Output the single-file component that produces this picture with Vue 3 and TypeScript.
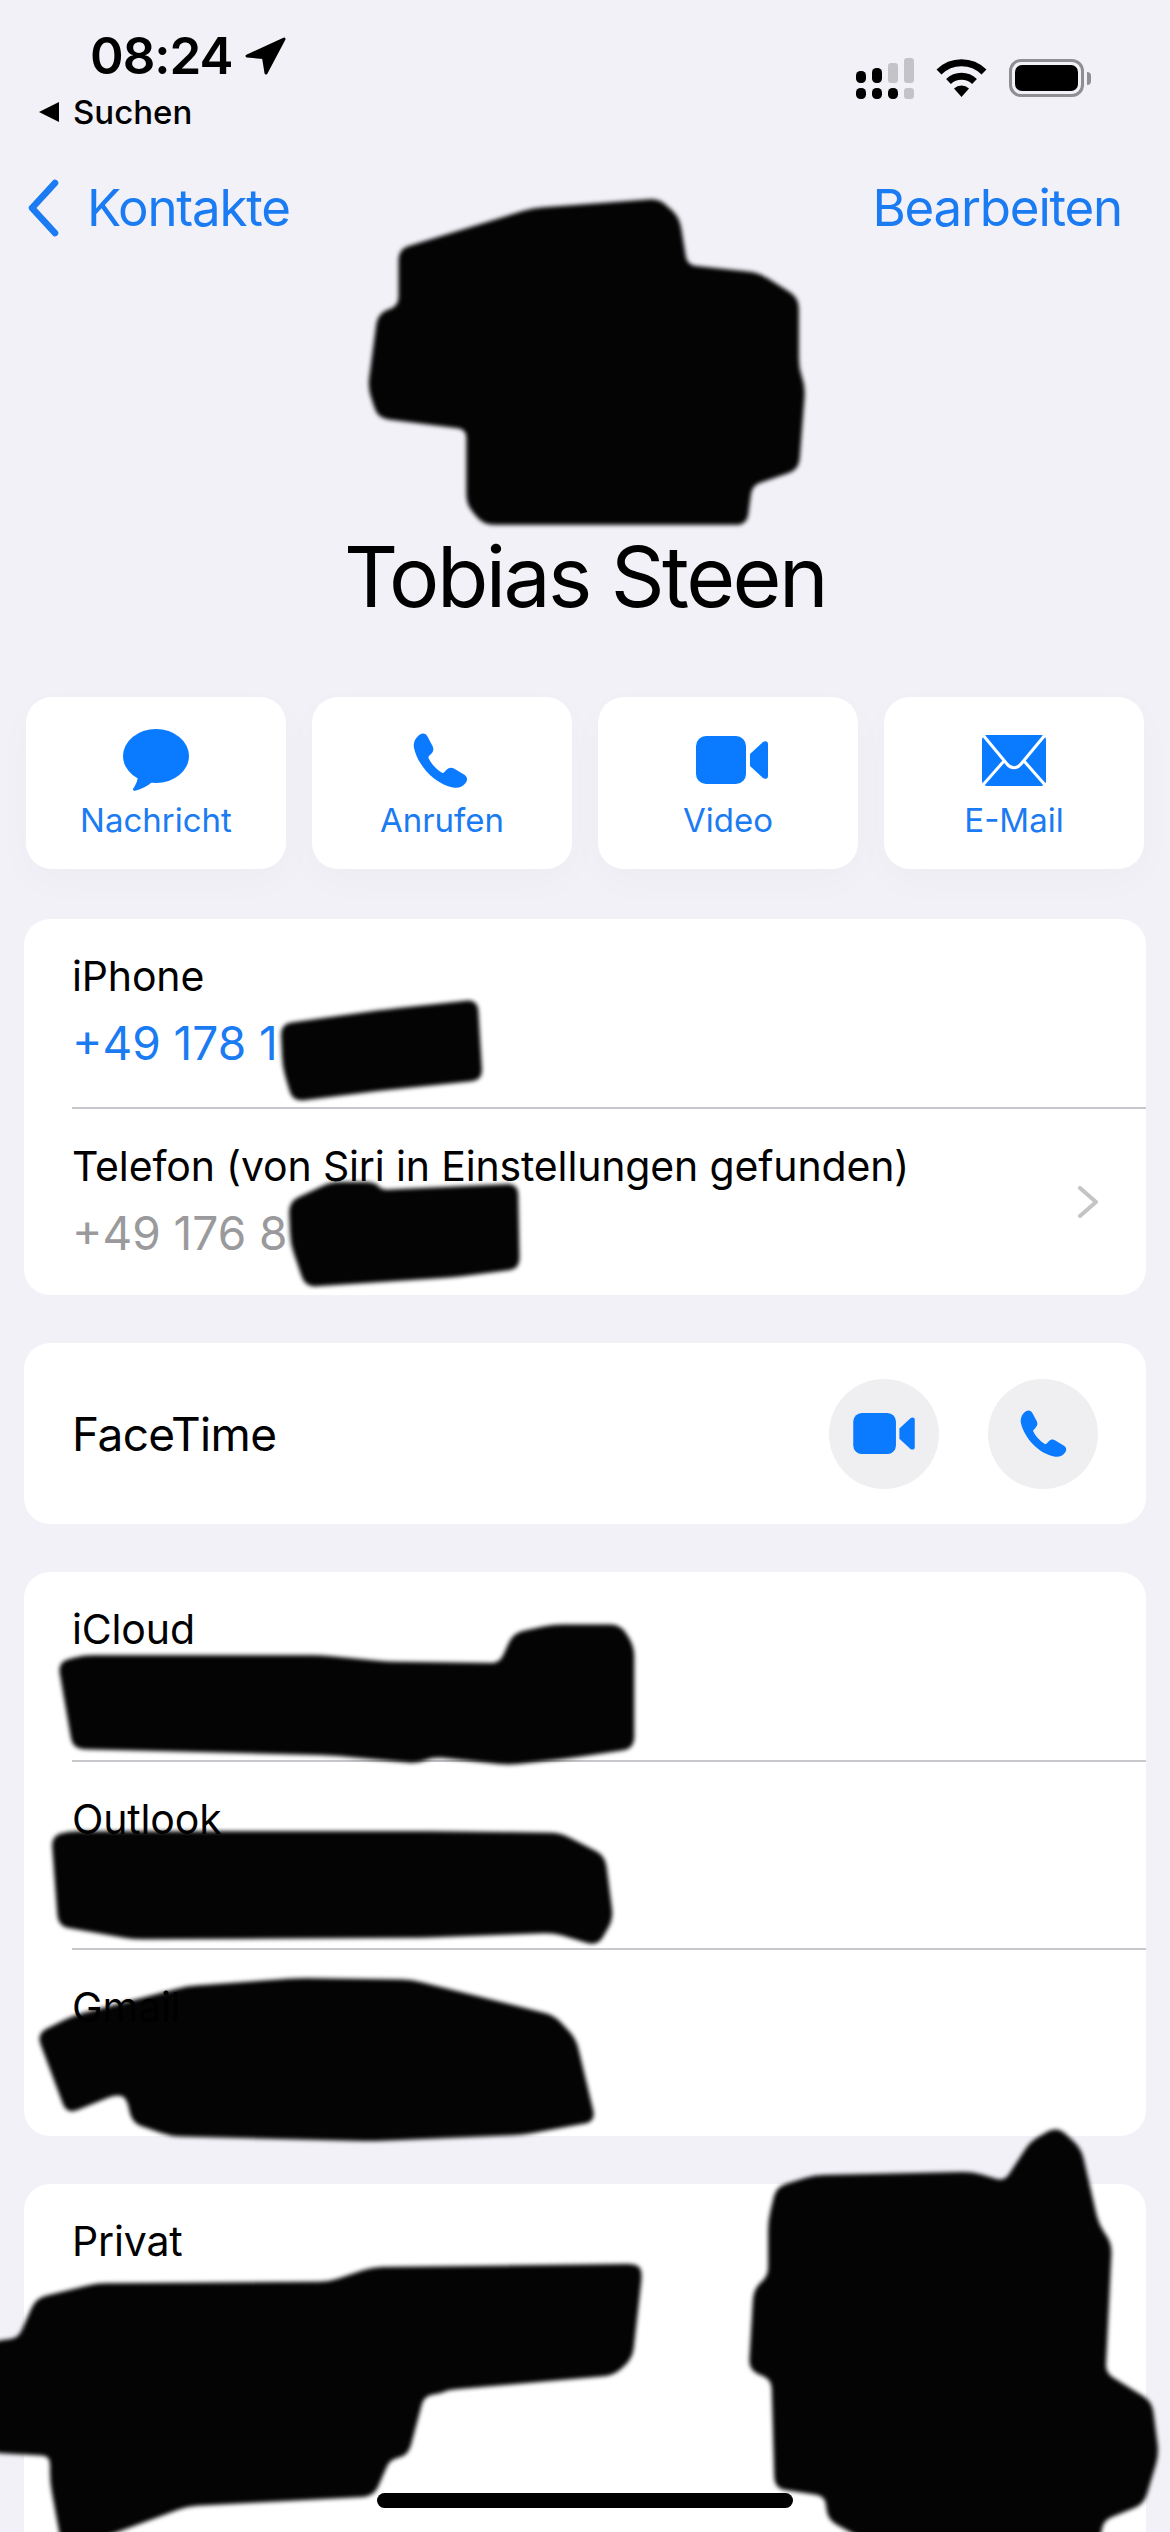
<script setup lang="ts">
interface Action { label: string; icon: string }
interface Row { label: string; value?: string; muted?: boolean; chevron?: boolean }

const actions: Action[] = [
  { label: 'Nachricht', icon: 'message' },
  { label: 'Anrufen', icon: 'phone' },
  { label: 'Video', icon: 'video' },
  { label: 'E-Mail', icon: 'mail' },
]

const phones: Row[] = [
  { label: 'iPhone', value: '+49 178 1' },
  { label: 'Telefon (von Siri in Einstellungen gefunden)', value: '+49 176 8', muted: true, chevron: true },
]

const mails: Row[] = [{ label: 'iCloud' }, { label: 'Outlook' }, { label: 'Gmail' }]

const phonePath =
  'M7 1.5C10-.5 13 .5 14.5 3.5L19.5 13C21 16 20.5 18.5 18 21L16 23C15.3 23.7 15.2 24.5 15.7 25.5C18.5 31 23 36 28.5 39.5C29.5 40.2 30.5 40 31.2 39.2L33.5 36.8C35.8 34.4 38.5 34 41.3 35.7L51 41.5C54.2 43.5 55 46.5 53 49.5C50 53.8 45.5 55.5 40 54.5C22 51 5 33 1 15C0 9.5 2.5 4.5 7 1.5Z'

// Schwarze Übermalungen aus dem Original, Koordinaten im 725x1568-Raster
const scribbles: string[] = [
  '248,155 330,130 408,124 420,135 425,165 470,170 494,185 494,228 498,240 494,290 465,300 462,324 300,324 290,312 290,265 235,258 229,240 235,195 248,190',
  '175,635 240,626 295,620 298,668 240,674 182,681 176,660',
  '180,745 205,733 232,733 236,738 320,734 321,785 280,790 190,796 181,770',
  '37,1030 52,1026 199,1026 240,1030 310,1031 319,1012 343,1007 384,1007 392,1020 392,1082 352,1088 315,1092 268,1087 259,1091 204,1086 46,1082',
  '33,1138 42,1135 259,1135 347,1136 374,1150 379,1188 370,1204 343,1196 259,1199 83,1200 37,1192',
  '24,1260 46,1249 116,1231 185,1226 255,1227 343,1249 356,1263 368,1313 324,1321 231,1325 106,1322 83,1314 79,1298 72,1296 42,1308',
  '394,1403 231,1405 204,1414 60,1415 23,1424 12,1449 -5,1451 -5,1518 32,1520 32,1537 39,1575 51,1575 116,1551 231,1545 241,1522 252,1520 262,1483 273,1481 278,1479 380,1470 391,1460 397,1407',
  '477,1375 482,1355 505,1348 602,1346 623,1352 639,1327 655,1318 669,1331 680,1378 688,1390 684,1470 713,1488 717,1520 708,1550 683,1560 680,1575 542,1575 514,1560 512,1545 481,1540 479,1473 465,1467 468,1418 477,1410',
]

// Ecken eines Polygons abrunden, damit es wie ein Pinselstrich aussieht
function rounded(points: string, r = 6): string {
  const pts = points.split(' ').map((p) => p.split(',').map(Number))
  const n = pts.length
  let d = ''
  for (let i = 0; i < n; i++) {
    const [x, y] = pts[i]
    const [px, py] = pts[(i + n - 1) % n]
    const [nx, ny] = pts[(i + 1) % n]
    const lp = Math.hypot(px - x, py - y)
    const ln = Math.hypot(nx - x, ny - y)
    const rp = Math.min(r, lp / 2) / lp
    const rn = Math.min(r, ln / 2) / ln
    const a = `${(x + (px - x) * rp).toFixed(1)} ${(y + (py - y) * rp).toFixed(1)}`
    const b = `${(x + (nx - x) * rn).toFixed(1)} ${(y + (ny - y) * rn).toFixed(1)}`
    d += `${i === 0 ? 'M' : 'L'}${a}Q${x} ${y} ${b}`
  }
  return d + 'Z'
}

const scribblePaths = scribbles.map((s) => rounded(s))
</script>

<template>
  <div class="page">
    <header class="status">
      <div class="status-left">
        <div class="time-row">
          <span class="time">08:24</span>
          <svg class="loc" viewBox="0 0 41 38"><path d="M39 2L21 36L18.500 20.500L2 19Z" fill="#000" stroke="#000" stroke-width="3" stroke-linejoin="round" /></svg>
        </div>
        <div class="back-app">
          <svg class="tri" viewBox="0 0 22 22"><path d="M21 1V21L1 11Z" fill="#000" /></svg>
          <span>Suchen</span>
        </div>
      </div>
      <div class="status-right">
        <svg class="signal" viewBox="0 0 58 41">
          <rect x="0" y="13" width="10" height="12" rx="4.500" />
          <rect x="16" y="10" width="10" height="15" rx="4.500" />
          <rect x="32" y="5" width="10" height="20" rx="3" fill="#c4c4c8" />
          <rect x="48" y="0" width="10" height="25" rx="3" fill="#c4c4c8" />
          <rect x="0" y="30" width="10" height="11" rx="4.500" />
          <rect x="16" y="30" width="10" height="11" rx="4.500" />
          <rect x="32" y="30" width="10" height="11" rx="4.500" />
          <rect x="48" y="30" width="10" height="11" rx="3" fill="#c4c4c8" />
        </svg>
        <svg class="wifi" viewBox="0 0 51 38">
          <path d="M3 13A32 32 0 0 1 48 13" fill="none" stroke="#000" stroke-width="7" />
          <path d="M12.500 22.500A19 19 0 0 1 38.500 22.500" fill="none" stroke="#000" stroke-width="7" />
          <path d="M18 29.500A11 11 0 0 1 33 29.500L25.500 38Z" fill="#000" />
        </svg>
        <div class="battery"><div class="battery-fill"></div></div>
        <div class="battery-nub"></div>
      </div>
    </header>

    <nav class="nav">
      <div class="nav-back">
        <svg class="chev" viewBox="0 0 34 58"><path d="M29 4L6 29L29 54" fill="none" stroke="#1a7bf2" stroke-width="6.500" stroke-linecap="round" stroke-linejoin="round" /></svg>
        <span>Kontakte</span>
      </div>
      <span>Bearbeiten</span>
    </nav>

    <h1 class="name">Tobias Steen</h1>

    <section class="actions">
      <div v-for="a in actions" :key="a.label" class="action">
        <div class="action-icon" :class="a.icon">
          <svg v-if="a.icon === 'message'" width="66" height="62" viewBox="0 0 66 62">
            <ellipse cx="33" cy="27" rx="33" ry="27" fill="#0a7aff" />
            <path d="M15 46C15 52 12 57 10 60C9.500 61.500 11 62 13 61.500C19 60 25 57 30 52Z" fill="#0a7aff" />
          </svg>
          <svg v-else-if="a.icon === 'phone'" width="55" height="55" viewBox="0 0 55 55"><path :d="phonePath" fill="#0a7aff" /></svg>
          <svg v-else-if="a.icon === 'video'" width="72" height="48" viewBox="0 0 72 48">
            <rect width="50" height="48" rx="10" fill="#0a7aff" />
            <path d="M54 18L67 6C69 4.500 72 5 72 8V40C72 43 69 43.500 67 42L54 30Z" fill="#0a7aff" />
          </svg>
          <svg v-else width="64" height="51" viewBox="0 0 64 51">
            <rect width="64" height="51" rx="5" fill="#0a7aff" />
            <path d="M1 0L25 29C29 34 35 34 39 29L63 0M0 51L22 26M64 51L42 26" fill="none" stroke="#fff" stroke-width="3" />
          </svg>
        </div>
        <span class="action-label">{{ a.label }}</span>
      </div>
    </section>

    <section class="card first">
      <div v-for="r in phones" :key="r.label" class="row">
        <div class="row-text">
          <div class="label">{{ r.label }}</div>
          <div class="value" :class="{ muted: r.muted }">{{ r.value }}</div>
        </div>
        <svg v-if="r.chevron" class="row-chev" viewBox="0 0 22 32"><path d="M3 2L19 16L3 30" fill="none" stroke="#c4c4c7" stroke-width="4" stroke-linecap="round" stroke-linejoin="round" /></svg>
      </div>
    </section>

    <section class="card facetime">
      <span>FaceTime</span>
      <div class="ft-buttons">
        <div class="ft-btn">
          <svg width="62" height="41" viewBox="0 0 72 48">
            <rect width="50" height="48" rx="10" fill="#0a7aff" />
            <path d="M54 18L67 6C69 4.500 72 5 72 8V40C72 43 69 43.500 67 42L54 30Z" fill="#0a7aff" />
          </svg>
        </div>
        <div class="ft-btn">
          <svg width="47" height="47" viewBox="0 0 55 55"><path :d="phonePath" fill="#0a7aff" /></svg>
        </div>
      </div>
    </section>

    <section class="card">
      <div v-for="r in mails" :key="r.label" class="row">
        <div class="row-text">
          <div class="label">{{ r.label }}</div>
        </div>
      </div>
    </section>

    <section class="card last">
      <div class="row">
        <div class="row-text">
          <div class="label">Privat</div>
        </div>
      </div>
    </section>

    <svg class="scribbles" viewBox="0 0 725 1568" preserveAspectRatio="none">
      <defs>
        <filter id="soft" x="-5%" y="-5%" width="110%" height="110%"><feGaussianBlur stdDeviation="1.200" /></filter>
      </defs>
      <path v-for="(d, i) in scribblePaths" :key="i" :d="d" fill="#000" fill-opacity="0.985" stroke="#000" stroke-width="2" stroke-linejoin="round" filter="url(#soft)" />
    </svg>

    <div class="home-bar"></div>
  </div>
</template>

<style>
html, body {
  margin: 0;
  background: #f1f1f7;
}
</style>

<style scoped>
.page {
  position: relative;
  width: 1170px;
  height: 2532px;
  overflow: hidden;
  background: #f1f1f7;
  font-family: Inter, "Liberation Sans", sans-serif;
  color: #000;
}

.status {
  height: 160px;
  display: flex;
  justify-content: space-between;
  box-sizing: border-box;
}
.status-left {
  padding: 32px 0 0 38px;
}
.time-row {
  display: flex;
  align-items: center;
  gap: 12px;
  margin-left: 52px;
  height: 48px;
}
.time {
  font-size: 51px;
  font-weight: 600;
  letter-spacing: -1px;
  line-height: 48px;
}
.loc {
  width: 41px;
  height: 38px;
}
.back-app {
  display: flex;
  align-items: center;
  gap: 13px;
  margin-top: 12px;
  font-size: 33px;
  font-weight: 500;
  line-height: 40px;
}
.tri {
  width: 22px;
  height: 22px;
}
.status-right {
  display: flex;
  align-items: flex-start;
  padding: 58px 79px 0 0;
}
.signal {
  width: 58px;
  height: 41px;
}
.wifi {
  width: 51px;
  height: 38px;
  margin: 1px 22px 0;
}
.battery {
  box-sizing: border-box;
  width: 75px;
  height: 38px;
  margin-top: 1px;
  border: 3px solid #8e8e93;
  border-radius: 12px;
  padding: 3px;
}
.battery-fill {
  height: 100%;
  background: #000;
  border-radius: 7px;
}
.battery-nub {
  width: 4px;
  height: 13px;
  margin: 14px 0 0 3px;
  background: #8e8e93;
  border-radius: 0 4px 4px 0;
}

.nav {
  display: flex;
  justify-content: space-between;
  align-items: center;
  height: 94px;
  margin-top: 1px;
  padding: 0 48px 0 26px;
  color: #1a7bf2;
  font-size: 51px;
  letter-spacing: -1.2px;
  line-height: 60px;
}
.nav-back {
  display: flex;
  align-items: center;
  gap: 27px;
}
.chev {
  width: 34px;
  height: 58px;
}

.name {
  margin: 272px 0 0;
  text-align: center;
  font-size: 84px;
  font-weight: 400;
  line-height: 100px;
  letter-spacing: -2.6px;
}

.actions {
  display: grid;
  grid-template-columns: repeat(4, 1fr);
  gap: 26px;
  margin: 70px 26px 0;
}
.action {
  height: 172px;
  background: #fff;
  border-radius: 26px;
  box-shadow: 0 12px 40px rgba(0, 0, 40, 0.025);
  display: flex;
  flex-direction: column;
  align-items: center;
}
.action-icon {
  height: 62px;
  margin-top: 32px;
  display: flex;
  align-items: center;
  justify-content: center;
}
.action-icon.phone {
  margin-left: -3px;
}
.action-icon.video {
  margin-left: 8px;
}
.action-label {
  margin-top: 7px;
  font-size: 33px;
  line-height: 44px;
  color: #1a7bf2;
}

.card {
  margin: 48px 24px 0;
  background: #fff;
  border-radius: 26px;
}
.card.first {
  margin-top: 50px;
}
.row {
  height: 188px;
  margin-left: 48px;
  padding-right: 48px;
  box-sizing: border-box;
  display: flex;
  align-items: center;
  justify-content: space-between;
}
.row + .row {
  border-top: 2px solid #c8c8cc;
}
.row-text {
  align-self: flex-start;
  padding-top: 30px;
}
.label {
  font-size: 41px;
  letter-spacing: -0.15px;
  line-height: 54px;
}
.value {
  margin-top: 12px;
  font-size: 46px;
  line-height: 56px;
  color: #1a7bf2;
}
.value.muted {
  color: #9a9a9c;
}
.row-chev {
  width: 22px;
  height: 32px;
  margin-right: -1px;
}

.facetime {
  height: 181px;
  box-sizing: border-box;
  padding: 0 48px;
  display: flex;
  align-items: center;
  justify-content: space-between;
  font-size: 46px;
  letter-spacing: -0.6px;
}
.ft-buttons {
  display: flex;
  gap: 49px;
}
.ft-btn {
  width: 110px;
  height: 110px;
  border-radius: 50%;
  background: #efeff1;
  display: flex;
  align-items: center;
  justify-content: center;
}

.last {
  height: 500px;
}

.scribbles {
  position: absolute;
  left: 0;
  top: 0;
  width: 1170px;
  height: 2532px;
  pointer-events: none;
}
.home-bar {
  position: absolute;
  left: 377px;
  top: 2493px;
  width: 416px;
  height: 15px;
  border-radius: 8px;
  background: #000;
}
</style>
